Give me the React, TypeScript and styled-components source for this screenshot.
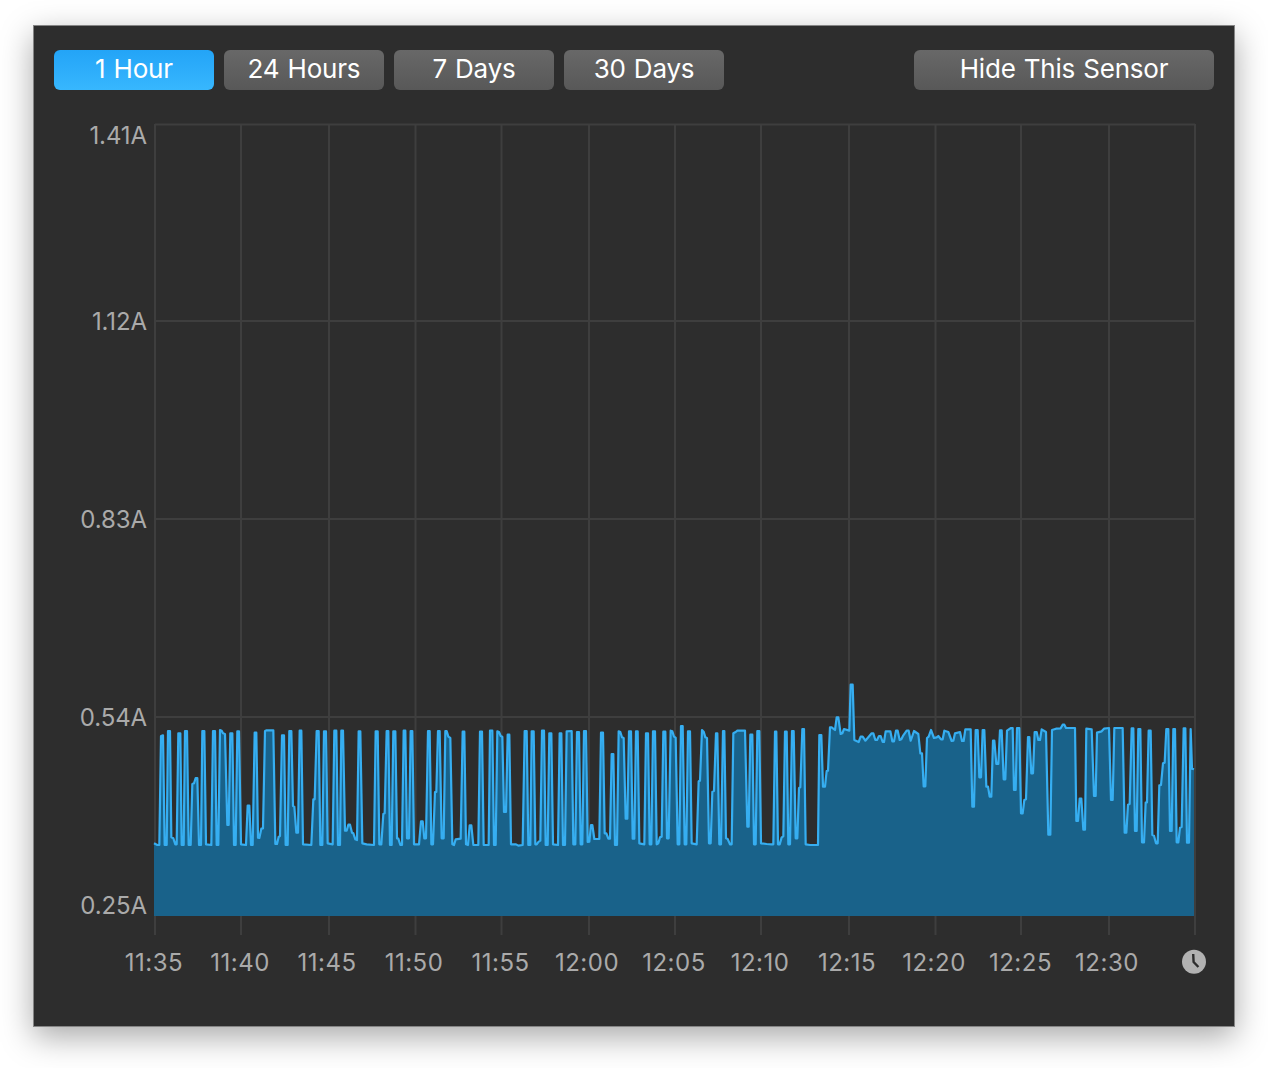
import React from "react";
import styled, { createGlobalStyle } from "styled-components";

const GlobalStyle = createGlobalStyle`
  html, body { margin: 0; padding: 0; background: #ffffff; }
  body { font-family: Inter, "Liberation Sans", sans-serif; }
`;

const Page = styled.main`
  width: 1268px;
  height: 1068px;
  padding: 25px 33px 0;
  box-sizing: border-box;
  overflow: hidden;
`;

const Panel = styled.section`
  width: 1202px;
  height: 1002px;
  box-sizing: border-box;
  padding-top: 24px;
  background: #2d2d2d;
  border: 1px solid #858585;
  box-shadow: 0 10px 30px rgba(0, 0, 0, 0.34);
`;

const Toolbar = styled.div`
  display: flex;
  gap: 10px;
  padding: 0 20px;
`;

const RangeButton = styled.button<{ $active?: boolean; $wide?: boolean }>`
  width: ${(p) => (p.$wide ? "300px" : "160px")};
  height: 40px;
  margin-left: ${(p) => (p.$wide ? "auto" : "0")};
  padding: 0 0 4px;
  border: 0;
  border-radius: 6px;
  color: #ffffff;
  font-family: Inter, "Liberation Sans", sans-serif;
  font-size: 26px;
  font-weight: 400;
  letter-spacing: -0.2px;
  word-spacing: 1px;
  background: ${(p) =>
    p.$active
      ? "linear-gradient(#23a4f7, #37b7fe)"
      : "linear-gradient(#686868, #585858)"};
`;

const ChartSvg = styled.svg`
  display: block;
  width: 1200px;
  height: 890px;
  margin-top: 20px;
`;

const AxisText = styled.text<{ $time?: boolean }>`
  fill: #aaaaaa;
  font-family: Inter, "Liberation Sans", sans-serif;
  font-size: 24px;
  letter-spacing: ${(p) => (p.$time ? "0.5px" : "-0.1px")};
`;

type P = [number, number];

const z2: number[] = [
  42,400,52,405,58,405,63,78,69,76,74,405,80,405,84,63,90,63,94,382,100,385,106,403,110,403,115,70,121,70,125,405,131,405,135,63,141,63,146,405,152,405,157,222,162,220,167,204,172,204,177,405,183,405,187,63,193,63,198,403,214,405,219,63,225,63,230,405,235,405,240,60,245,62,249,70,255,72,262,345,266,345,271,70,277,70,282,405,287,405,292,64,297,64,303,403,318,405,323,287,328,287,333,405,338,405,344,68,349,68,354,383,358,384,364,356,369,355,375,63,380,61,400,61,406,402,411,402,416,380,420,378,426,76,432,76,437,405,443,405,448,63,454,63,459,288,463,290,469,368,474,368,479,62,484,62,489,403,514,405,520,268,524,268,530,63,536,63,541,405,547,405,552,64,558,64,563,400,578,403,583,62,589,62,594,405,600,405,604,62,609,62,615,362,620,362,625,344,630,344,636,368,640,370,646,388,651,390,656,64,661,64,667,400,680,403,702,405,707,64,713,64,718,403,724,403,730,312,734,310,740,63,745,63,750,405,755,405,760,64,766,64,771,385,775,386,781,405,786,405,791,62,796,62,801,385,807,385,812,63,817,63,822,403,837,403,843,334,848,334,853,385,858,385,864,63,869,63,874,403,879,403,885,246,889,246,894,63,899,63,905,385,911,385,916,63,920,63,925,80,931,84,937,403,942,405,947,388,962,386,968,65,973,65,978,403,984,405,989,346,994,346,1000,405,1015,405,1020,65,1026,65,1031,405,1046,405,
];

const z3: number[] = [
  0,62,7,62,12,405,17,405,22,64,27,66,32,78,37,80,42,306,48,306,53,74,58,74,63,403,78,403,85,407,98,405,104,63,110,63,115,405,121,405,125,64,131,64,136,403,140,403,146,395,151,392,156,62,162,62,167,405,173,405,178,70,184,70,189,403,204,405,209,70,214,70,219,405,225,405,230,64,245,63,250,403,256,403,261,66,267,66,272,403,277,403,282,63,288,63,293,396,298,395,303,345,307,345,313,387,328,387,333,68,339,68,344,370,349,370,355,386,360,386,365,132,370,132,375,405,381,405,386,64,391,66,396,82,401,84,407,326,412,326,417,64,423,64,428,386,433,386,438,64,443,64,448,400,463,403,468,70,474,70,479,403,484,403,489,64,495,64,500,403,505,400,510,382,515,380,520,65,526,65,531,385,536,385,542,62,547,64,552,80,557,83,563,403,568,403,573,48,578,48,584,403,589,403,594,64,600,64,605,400,620,403,626,214,630,212,636,60,641,65,646,82,651,84,657,400,662,400,667,245,672,243,678,70,682,70,688,403,693,403,699,63,703,63,708,385,713,387,720,403,725,403,730,70,737,66,742,62,765,62,772,350,776,350,781,74,787,74,792,403,797,403,802,63,808,63,813,400,830,402,845,403,850,403,855,65,859,65,864,403,869,403,875,382,880,379,885,65,890,65,895,403,900,403,906,63,911,63,917,385,922,385,927,234,931,232,937,57,942,57,947,403,
];

const z4: number[] = [
  0,525,24,525,28,195,34,195,39,350,45,350,50,303,54,302,60,172,65,172,75,180,80,142,85,142,92,192,97,190,102,177,118,182,122,44,128,44,133,210,146,216,152,200,158,200,166,212,173,204,185,190,190,190,196,210,201,210,207,198,212,198,218,216,222,216,227,184,241,184,247,214,252,214,258,182,263,182,269,210,274,208,280,196,290,182,296,182,302,212,307,198,312,183,325,192,331,250,336,250,341,349,346,349,351,204,356,200,363,180,372,204,380,202,385,198,393,208,398,208,403,182,415,186,425,213,430,212,435,190,450,186,456,213,461,213,466,178,482,178,487,410,492,410,497,180,503,180,508,322,513,322,518,180,523,180,529,350,534,350,539,380,544,380,549,212,553,212,559,282,565,282,570,181,575,181,581,328,586,328,591,182,603,174,608,174,612,360,617,360,621,174,628,174,633,430,638,430,643,390,648,388,654,201,658,201,664,310,669,310,674,186,680,186,685,210,690,210,695,178,708,186,715,494,721,494,726,180,738,176,752,175,758,164,763,164,768,174,795,174,799,453,804,453,809,386,814,386,820,479,825,479,829,176,845,178,852,378,857,378,861,188,875,184,882,176,897,174,903,390,908,390,913,174,938,174,944,488,949,488,954,404,959,402,965,175,970,175,975,483,980,483,985,177,991,177,996,517,1002,517,1007,398,1011,397,1016,182,1022,182,1027,495,1032,497,1038,520,1043,520,1048,346,1053,345,1059,280,1064,278,1069,177,1075,177,1080,483,1085,483,1090,177,1095,177,1100,517,1105,517,1110,473,1115,471,1121,175,1126,175,1131,518,1137,518,1142,177,1146,296,1152,298,
];

const toPoints = (raw: number[], ox: number, oy: number): P[] => {
  const out: P[] = [];
  for (let i = 0; i < raw.length; i += 2) {
    out.push([+(ox + raw[i] / 3).toFixed(2), +(oy + raw[i + 1] / 3).toFixed(2)]);
  }
  return out;
};

const series: P[] = [
  ...toPoints(z2, 140, 710),
  ...toPoints(z3, 490, 710),
  ...toPoints(z4, 810, 670),
];

const linePoints = series.map((p) => p.join(",")).join(" ");
const FILL_BOTTOM = 916;
const areaPoints = `154,${FILL_BOTTOM} ${linePoints} 1194,${FILL_BOTTOM}`;

const gridX = [155, 241, 329, 415.5, 501.5, 589, 675, 761, 849, 935.5, 1021, 1109, 1195];
const gridY = [124.5, 321, 519, 717];

const yLabels: { text: string; y: number }[] = [
  { text: "1.41A", y: 144 },
  { text: "1.12A", y: 330 },
  { text: "0.83A", y: 528 },
  { text: "0.54A", y: 726 },
  { text: "0.25A", y: 914 },
];

const xLabels: { text: string; x: number }[] = [
  { text: "11:35", x: 154 },
  { text: "11:40", x: 240 },
  { text: "11:45", x: 327 },
  { text: "11:50", x: 414 },
  { text: "11:55", x: 500.5 },
  { text: "12:00", x: 587 },
  { text: "12:05", x: 674 },
  { text: "12:10", x: 760 },
  { text: "12:15", x: 847 },
  { text: "12:20", x: 934 },
  { text: "12:25", x: 1020.5 },
  { text: "12:30", x: 1107 },
];

export default function App() {
  return (
    <>
      <GlobalStyle />
      <Page>
        <Panel>
          <Toolbar>
            <RangeButton $active>1 Hour</RangeButton>
            <RangeButton>24 Hours</RangeButton>
            <RangeButton>7 Days</RangeButton>
            <RangeButton>30 Days</RangeButton>
            <RangeButton $wide>Hide This Sensor</RangeButton>
          </Toolbar>
          <ChartSvg viewBox="34 110 1200 890">
            <g stroke="#3e3e3e" strokeWidth="2" fill="none">
              {gridX.map((x) => (
                <line key={x} x1={x} x2={x} y1={124} y2={935} />
              ))}
              {gridY.map((y) => (
                <line key={y} x1={155} x2={1195} y1={y} y2={y} />
              ))}
            </g>
            <polygon points={areaPoints} fill="#19628a" />
            <polyline
              points={linePoints}
              fill="none"
              stroke="#36aef1"
              strokeWidth="2.2"
              strokeLinejoin="round"
            />
            {yLabels.map((l) => (
              <AxisText key={l.text} x={147} y={l.y} textAnchor="end">
                {l.text}
              </AxisText>
            ))}
            {xLabels.map((l) => (
              <AxisText $time key={l.text} x={l.x} y={970.5} textAnchor="middle">
                {l.text}
              </AxisText>
            ))}
            <circle cx={1194} cy={961.8} r={12} fill="#b2b2b2" />
            <path
              d="M1193.2 954 L1193.6 962 L1198.4 967"
              fill="none"
              stroke="#2d2d2d"
              strokeWidth="2.4"
              strokeLinejoin="round"
            />
          </ChartSvg>
        </Panel>
      </Page>
    </>
  );
}
